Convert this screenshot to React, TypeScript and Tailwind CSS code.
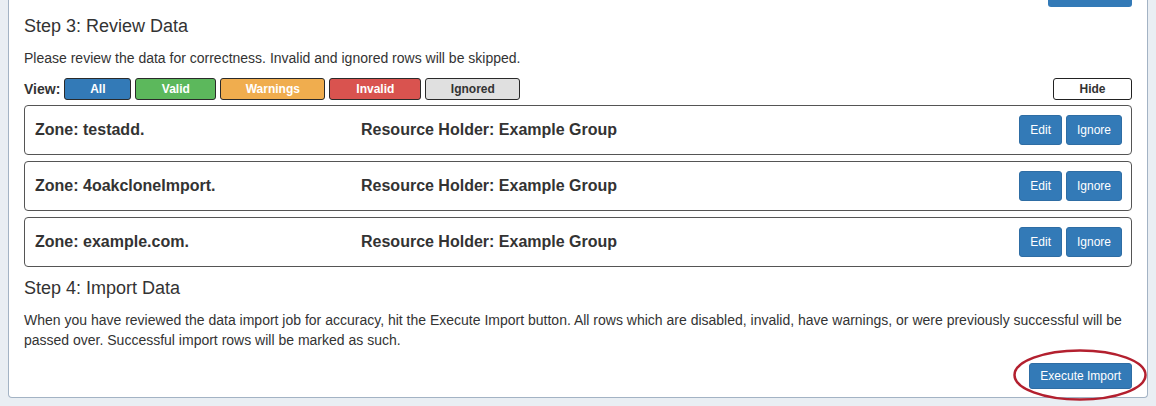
const filters = [
  { label: "All", w: "w-[67px]", cls: "bg-[#337ab7] text-white" },
  { label: "Valid", w: "w-[81px]", cls: "bg-[#5cb85c] text-white" },
  { label: "Warnings", w: "w-[105px]", cls: "bg-[#f0ad4e] text-white" },
  { label: "Invalid", w: "w-[92px]", cls: "bg-[#d9534f] text-white" },
  { label: "Ignored", w: "w-[95px]", cls: "bg-[#e0e0e0] text-[#333]" },
];

const rows = ["testadd.", "4oakcloneImport.", "example.com."];

function ImportRow({ zone }: { zone: string }) {
  return (
    <div className="flex items-center rounded-[4px] border border-[#555] bg-white py-[9px] pl-[10px] pr-[9px]">
      <div className="w-[326px] text-[16px] font-bold text-[#333]">Zone: {zone}</div>
      <div className="flex-1 text-[16px] font-bold text-[#333]">Resource Holder: Example Group</div>
      <div className="flex gap-[4px]">
        <button className="h-[30px] rounded-[3px] border border-[#2e6da4] bg-[#337ab7] px-[10px] text-[12px] text-white">
          Edit
        </button>
        <button className="h-[30px] rounded-[3px] border border-[#2e6da4] bg-[#337ab7] px-[10px] text-[12px] text-white">
          Ignore
        </button>
      </div>
    </div>
  );
}

export default function App() {
  return (
    <div
      className="min-h-screen bg-[#e9eef3] px-2 text-[#333]"
      style={{ fontFamily: '"Liberation Sans", Arial, sans-serif' }}
    >
      <div className="rounded-b-[4px] border border-t-0 border-[#a3b3c4] bg-white px-[15px] pb-[8px]">
        <div className="ml-auto h-[7px] w-[84px] rounded-b-[3px] bg-[#337ab7]" />

        <h4 className="mt-[9px] text-[18px] leading-[20px] text-[#333]">Step 3: Review Data</h4>
        <p className="mt-[12px] text-[14px] leading-[20px]">
          Please review the data for correctness. Invalid and ignored rows will be skipped.
        </p>

        <div className="mt-[10px] flex h-[22px] items-center">
          <span className="mr-[4px] text-[14px] font-bold">View:</span>
          <div className="flex gap-[4px]">
            {filters.map((f) => (
              <button
                key={f.label}
                className={`h-[22px] rounded-[3px] border border-[#2a2a2a] text-[12px] font-bold ${f.w} ${f.cls}`}
              >
                {f.label}
              </button>
            ))}
          </div>
          <button className="ml-auto h-[22px] w-[79px] rounded-[3px] border border-[#222] bg-white text-[12px] font-bold text-[#333]">
            Hide
          </button>
        </div>

        <div className="mt-[5px] flex flex-col gap-[6px]">
          {rows.map((z) => (
            <ImportRow key={z} zone={z} />
          ))}
        </div>

        <h4 className="mt-[11px] text-[18px] leading-[20px] text-[#333]">Step 4: Import Data</h4>
        <p className="mt-[12px] text-[14px] leading-[20px]">
          When you have reviewed the data import job for accuracy, hit the Execute Import button. All rows which are
          disabled, invalid, have warnings, or were previously successful will be
          <br />
          passed over. Successful import rows will be marked as such.
        </p>

        <div className="mt-[13px] flex justify-end">
          <div className="relative">
            <button className="h-[26px] rounded-[3px] border border-[#2e6da4] bg-[#337ab7] px-[10px] text-[12px] text-white">
              Execute Import
            </button>
            <svg
              className="pointer-events-none absolute left-[-16px] top-[-14px] overflow-visible"
              width="134"
              height="52"
              viewBox="0 0 134 52"
            >
              <ellipse cx="67" cy="26" rx="65.5" ry="24.5" fill="none" stroke="#b3202f" strokeWidth="2.5" />
            </svg>
          </div>
        </div>
      </div>
    </div>
  );
}
